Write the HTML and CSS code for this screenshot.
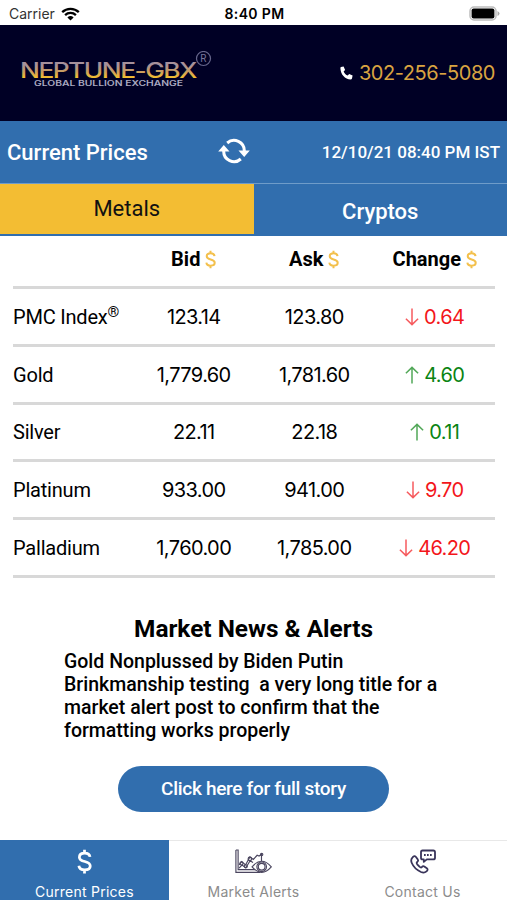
FILE: index.html
```html
<!DOCTYPE html>
<html lang="en">
<head>
	<meta charset="utf-8">
	<title>Neptune-GBX</title>
	<link rel="stylesheet" href="styles.css">
</head>
<body>
	<!-- shared icons -->
	<svg class="defs" width="0" height="0">
		<symbol id="dollar" viewBox="0 0 12 20">
			<path d="M6 .5v3M6 16.500v3M10.400 6.300C10.100 4.300 8.600 3.300 6.200 3.300 3.700 3.300 1.900 4.500 1.900 6.500c0 4.800 8.700 2.200 8.700 7.100 0 2-1.800 3.100-4.400 3.100-2.800 0-4.500-1.200-4.700-3.300" fill="none" stroke="currentColor" stroke-width="2.200"/>
		</symbol>
		<symbol id="down" viewBox="0 0 14 18">
			<path d="M7 .5v16M.9 10.700l6.100 5.900 6.100-5.900" fill="none" stroke="currentColor" stroke-width="1.500"/>
		</symbol>
		<symbol id="up" viewBox="0 0 14 18">
			<path d="M7 17.500v-16M.9 7.300L7 1.400l6.100 5.900" fill="none" stroke="currentColor" stroke-width="1.500"/>
		</symbol>
	</svg>

	<div class="status">
		<div class="carrier">Carrier
			<svg width="19" height="14" viewBox="0 0 19 14">
				<path d="M1.200 5.200a12 12 0 0 1 16.600 0M4.100 8.100a7.800 7.800 0 0 1 10.800 0" fill="none" stroke="#000" stroke-width="2.300"/>
				<path d="M6.400 10.500a4.500 4.500 0 0 1 6.200 0L9.500 13.600z"/>
			</svg>
		</div>
		<div class="time">8:40 PM</div>
		<div class="battery">
			<svg width="31" height="15" viewBox="0 0 31 15">
				<rect x="1" y="1" width="26" height="13" rx="4" fill="#fff" stroke="#bdbdbd" stroke-width="1.500"/>
				<rect x="2.600" y="2.600" width="22.800" height="9.800" rx="2"/>
				<path d="M28.500 5v5q2-1 2-2.500t-2-2.500z" fill="#aaa"/>
			</svg>
		</div>
	</div>

	<div class="header">
		<svg class="logo" width="194" height="40" viewBox="0 0 194 40">
			<defs>
				<linearGradient id="gold" x1="0" y1="0" x2="0" y2="1">
					<stop offset="0.300" stop-color="#a5909b"/>
					<stop offset="0.550" stop-color="#c79c62"/>
					<stop offset="0.800" stop-color="#f2bd30"/>
				</linearGradient>
			</defs>
			<text class="logo-name" x="0" y="26.500" textLength="176" lengthAdjust="spacingAndGlyphs" fill="url(#gold)">NEPTUNE-GBX</text>
			<text class="logo-sub" x="14" y="35" textLength="149" lengthAdjust="spacingAndGlyphs">GLOBAL BULLION EXCHANGE</text>
			<circle cx="183.500" cy="7.500" r="7" fill="none" stroke="#66668c" stroke-width="1.200"/>
			<text class="logo-reg" x="180.200" y="11">R</text>
		</svg>
		<div class="phone">
			<svg width="13" height="14" viewBox="0 0 13 14">
				<path d="M1 .9L3.600.4 5.100 4 3.600 5.400c.8 1.900 2.200 3.400 4.100 4.200L9.200 8l3.400 1.600-.6 2.900c-.2.700-.7 1-1.400 1C5 13.300.5 8.400.4 2c0-.6.1-.9.6-1.100z" fill="#fff"/>
			</svg>
			<span>302-256-5080</span>
		</div>
	</div>

	<div class="bar">
		<div class="bar-title">Current Prices</div>
		<svg class="refresh" width="32" height="26" viewBox="0 0 32 26">
			<path d="M9.200 5A10.300 10.300 0 0 1 26.300 13M22.800 21A10.300 10.300 0 0 1 5.700 13" fill="none" stroke="#fff" stroke-width="3"/>
			<path d="M20.500 12.500h11.300l-5.600 6.600zM.2 13.500h11.300L5.800 6.900z" fill="#fff"/>
		</svg>
		<div class="bar-date">12/10/21 08:40 PM IST</div>
	</div>
	<div class="tabs">
		<div class="tab active">Metals</div>
		<div class="tab">Cryptos</div>
	</div>

	<div class="prices">
		<div class="row head">
			<div></div>
			<div>Bid <svg class="usd"><use href="#dollar"/></svg></div>
			<div>Ask <svg class="usd"><use href="#dollar"/></svg></div>
			<div>Change <svg class="usd"><use href="#dollar"/></svg></div>
		</div>
		<div class="row">
			<div class="name">PMC Index<span class="reg">®</span></div>
			<div>123.14</div>
			<div>123.80</div>
			<div class="red"><svg class="arrow"><use href="#down"/></svg>0.64</div>
		</div>
		<div class="row">
			<div class="name">Gold</div>
			<div>1,779.60</div>
			<div>1,781.60</div>
			<div class="green"><svg class="arrow"><use href="#up"/></svg>4.60</div>
		</div>
		<div class="row">
			<div class="name">Silver</div>
			<div>22.11</div>
			<div>22.18</div>
			<div class="green"><svg class="arrow"><use href="#up"/></svg>0.11</div>
		</div>
		<div class="row">
			<div class="name">Platinum</div>
			<div>933.00</div>
			<div>941.00</div>
			<div class="red"><svg class="arrow"><use href="#down"/></svg>9.70</div>
		</div>
		<div class="row">
			<div class="name">Palladium</div>
			<div>1,760.00</div>
			<div>1,785.00</div>
			<div class="red"><svg class="arrow"><use href="#down"/></svg>46.20</div>
		</div>
	</div>

	<div class="news">
		<div class="news-title">Market News &amp; Alerts</div>
		<div class="news-text">Gold Nonplussed by Biden Putin Brinkmanship testing&nbsp; a very long title for a market alert post to confirm that the formatting works properly</div>
		<div class="button">Click here for full story</div>
	</div>

	<div class="menu">
		<div class="menu-item active">
			<svg width="15" height="25" viewBox="0 0 12 20"><use href="#dollar"/></svg>
			<span>Current Prices</span>
		</div>
		<div class="menu-item">
			<svg width="39" height="26" viewBox="0 0 39 26" fill="none" stroke="#4b465f" stroke-width="1.200">
				<path d="M1.200 1h2.300v20.500H25M1.200 1v23.300h25.500"/>
				<path d="M4.500 16.500l2.700-3.400 4 3.500 4.600-8.300 3.500 2.600 4-4.400 2 .8 2.500-1.700v7M4.500 20l3-3.300 4 2.800 4.500-7.300 3 1.800"/>
				<circle cx="7" cy="15" r="1.600"/><circle cx="11.500" cy="18" r="1.600"/><circle cx="15.700" cy="10.300" r="1.800"/><circle cx="28" cy="5.800" r="1.200"/>
				<path d="M18 18.500q10-11.500 20 0-10 11.500-20 0z" fill="#fff"/>
				<circle cx="28" cy="18.500" r="5"/><circle cx="28" cy="18.500" r="3.500"/>
			</svg>
			<span>Market Alerts</span>
		</div>
		<div class="menu-item">
			<svg width="26" height="25" viewBox="0 0 26 25" fill="none" stroke="#39345a" stroke-width="1.800" stroke-linejoin="round">
				<path d="M12.500 1.500h10.800q1.700 0 1.700 1.700v5.500q0 1.700-1.700 1.700h-6.500l-3 2.500v-2.500h-1.300q-1.500 0-1.500-1.700V3.200q0-1.700 1.500-1.700z"/>
				<path d="M14 6h1.700M17 6h1.700M20 6h1.700"/>
				<path d="M2.600 8.400Q4.300 6.200 6 8l1.800 2.600q.8 1.300-.6 2.400-1 1 0 2.300l2.500 2.600q1.300 1.100 2.300 0 1-1.300 2.300-.5l2.500 1.800q1.700 1.500-.3 3.200-2.300 2-5.500.6C6.300 20.800 3.600 18.300 1.800 14 .3 10.700 1.800 9.200 2.600 8.400z"/>
			</svg>
			<span>Contact Us</span>
		</div>
	</div>
</body>
</html>
```
FILE: styles.css
```css
body{
	margin: 0;
	height: 900px;
	display: flex;
	flex-direction: column;
	background: white;
	font-family: Roboto, sans-serif;
	color: black;
	overflow: hidden;
}
.defs{
	position: absolute;
}
.status{
	height: 25px;
	display: grid;
	grid-template-columns: 1fr auto 1fr;
	align-items: center;
	padding: 2px 7px 0 9px;
	box-sizing: border-box;
	font-family: Inter, sans-serif;
	font-size: 14px;
}
.carrier{
	display: flex;
	align-items: center;
	gap: 6px;
	color: #333;
}
.time{
	font-weight: 600;
	letter-spacing: .35px;
}
.battery{
	display: flex;
	justify-content: flex-end;
}
.header{
	height: 96px;
	display: flex;
	justify-content: space-between;
	align-items: center;
	padding: 0 12px 0 20px;
	box-sizing: border-box;
	background-color: #000025;
}
.logo{
	margin-bottom: 5px;
}
.logo-name{
	font-family: Inter, sans-serif;
	font-size: 21px;
	font-weight: 500;
	letter-spacing: -1.2px;
}
.logo-sub{
	font-family: Inter, sans-serif;
	font-size: 7px;
	font-weight: 600;
	fill: #aaa9c0;
}
.logo-reg{
	font-size: 10px;
	fill: #77779a;
}
.phone{
	display: flex;
	align-items: center;
	gap: 6px;
	font-family: Inter, sans-serif;
	font-size: 20px;
	letter-spacing: -.45px;
	color: #d9a441;
}
.bar{
	height: 62px;
	display: grid;
	grid-template-columns: 1fr auto 1fr;
	align-items: center;
	padding: 0 7px;
	box-sizing: border-box;
	background-color: #316eae;
	color: white;
	font-weight: 500;
}
.bar-title{
	font-size: 22px;
}
.refresh{
	margin: 0 39px 2px 0;
}
.bar-date{
	font-size: 17px;
	text-align: right;
}
.tabs{
	height: 53px;
	display: flex;
	border-top: 1px solid #6f9cc9;
	box-sizing: border-box;
	background-color: #316eae;
}
.tab{
	flex: 1;
	padding-top: 3px;
	line-height: 50px;
	text-align: center;
	font-size: 22px;
	font-weight: 500;
	color: white;
}
.tab.active{
	height: 50px;
	padding: 0;
	background-color: #f3bd33;
	color: #111;
	font-weight: 400;
}
.prices{
	margin: 0 12px 0 13px;
}
.row{
	height: 57.8px;
	display: grid;
	grid-template-columns: repeat(4, 1fr);
	align-items: center;
	padding-top: 1px;
	box-sizing: border-box;
	border-bottom: 3px solid #d8d8d8;
	font-family: Inter, sans-serif;
	font-size: 20px;
	letter-spacing: -.6px;
	text-align: center;
}
.row.head{
	height: 53px;
	padding: 0 0 5px;
	font-family: Roboto, sans-serif;
	font-weight: 700;
	letter-spacing: 0;
}
.row .name{
	font-family: Roboto, sans-serif;
	letter-spacing: -.2px;
	text-align: left;
}
.reg{
	font-size: 15px;
	position: relative;
	top: -7px;
}
.usd{
	width: 11px;
	height: 19px;
	vertical-align: -3px;
	color: #f3c04c;
}
.arrow{
	width: 14px;
	height: 18px;
	margin-right: 5px;
	vertical-align: -2px;
	opacity: .7;
}
.red{
	color: #f3161b;
}
.green{
	color: #0a8413;
}
.news{
	flex: 1;
	padding-top: 36px;
}
.news-title{
	font-size: 24.4px;
	line-height: 30px;
	font-weight: 700;
	text-align: center;
}
.news-text{
	width: 384px;
	margin: 6px 0 0 64px;
	font-size: 19.5px;
	line-height: 23px;
	font-weight: 500;
}
.button{
	width: 271px;
	height: 46px;
	margin: 24px auto 0;
	border-radius: 23px;
	background-color: #316eae;
	color: white;
	font-size: 19px;
	letter-spacing: -.3px;
	line-height: 46px;
	font-weight: 500;
	text-align: center;
}
.menu{
	height: 60px;
	display: flex;
	border-top: 1px solid #e8e8e8;
	box-sizing: border-box;
}
.menu-item{
	flex: 1;
	display: flex;
	flex-direction: column;
	align-items: center;
	gap: 8px;
	padding-top: 8px;
	box-sizing: border-box;
	font-family: Inter, sans-serif;
	font-size: 14px;
	letter-spacing: .25px;
	line-height: 20px;
	color: #8c8c8c;
}
.menu-item svg{
	height: 25px;
	flex-shrink: 0;
}
.menu-item.active{
	margin-top: -1px;
	padding-top: 9px;
	background-color: #316eae;
	color: white;
}
```
